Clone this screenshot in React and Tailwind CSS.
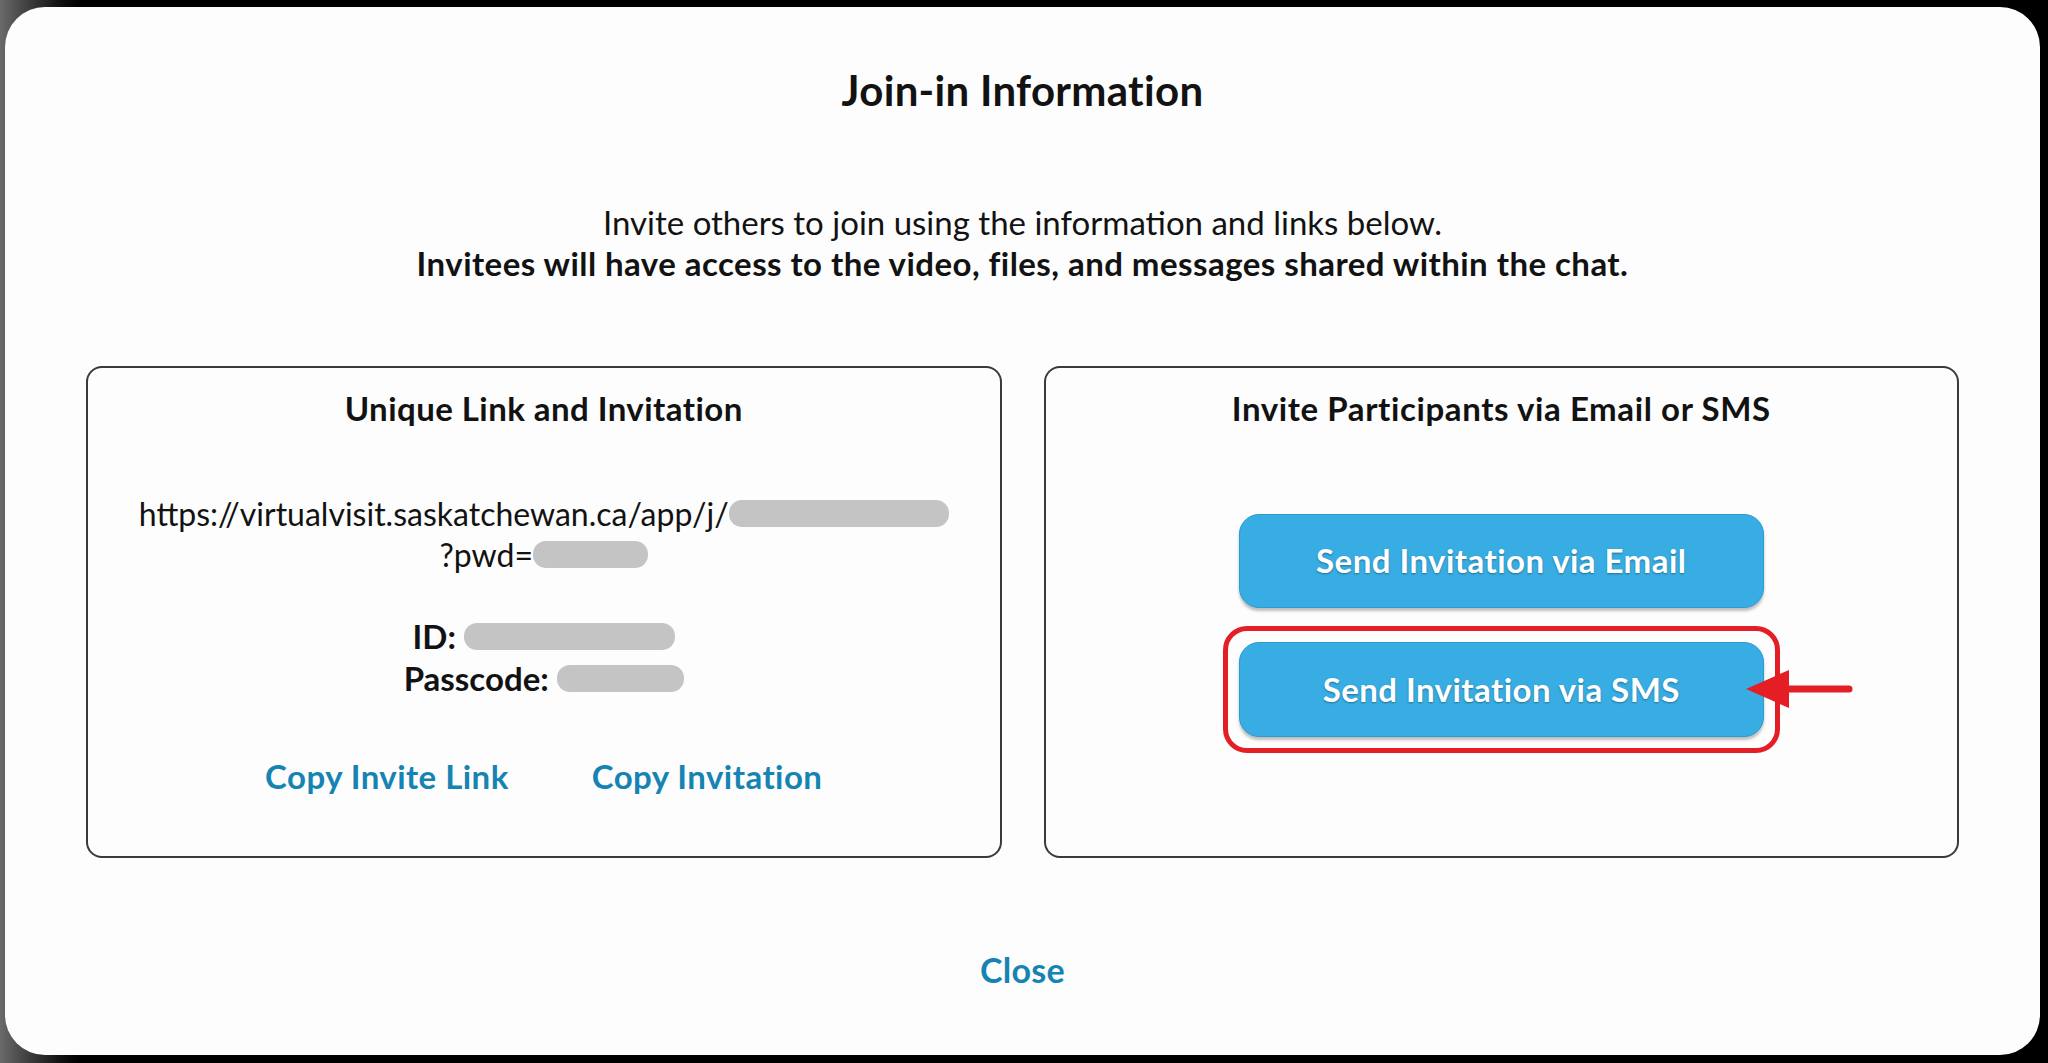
import React from 'react';

function Redacted({ className = '' }) {
  return <span className={`inline-block h-[27px] rounded-[13px] bg-[#c4c4c4] align-middle ${className}`} />;
}

export default function App() {
  return (
    <div className="min-h-screen w-full bg-[linear-gradient(to_right,#6a6a6a,#3c3c3c_30px,#111_60px,#000_80px)] pt-[7px] pl-[5px] pr-[8px] pb-[8px] font-['Lato',sans-serif] text-[#121212]">
      <div className="flex h-[1048px] flex-col items-center rounded-[40px] bg-[#fdfdfd] pt-[60px]">
        {/* Title */}
        <h1 className="text-[42px] font-bold leading-[46px] tracking-[0.3px]">Join-in Information</h1>

        {/* Description */}
        <div className="mt-[89px] text-center text-[33px] leading-[41px]">
          <p>Invite others to join using the information and links below.</p>
          <p className="font-bold tracking-[0.45px]">Invitees will have access to the video, files, and messages shared within the chat.</p>
        </div>

        {/* Panels */}
        <div className="mt-[82px] grid w-full grid-cols-2 gap-[42px] px-[81px]">
          {/* Left panel */}
          <div className="flex h-[492px] flex-col items-center rounded-[16px] border-2 border-[#3a3a3a] pt-[20px]">
            <h2 className="text-[33px] font-bold leading-[40px] tracking-[0.45px]">Unique Link and Invitation</h2>

            <div className="mt-[65px] text-center text-[32px] leading-[41px]">
              <p className="flex items-center justify-center">
                <span>https://virtualvisit.saskatchewan.ca/app/j/</span>
                <Redacted className="w-[220px]" />
              </p>
              <p className="flex items-center justify-center">
                <span>?pwd=</span>
                <Redacted className="w-[115px]" />
              </p>
            </div>

            <div className="mt-[40px] text-center text-[33px] font-bold leading-[42px]">
              <p className="flex items-center justify-center">
                <span className="mr-[8px]">ID:</span>
                <Redacted className="w-[211px]" />
              </p>
              <p className="flex items-center justify-center">
                <span className="mr-[8px]">Passcode:</span>
                <Redacted className="w-[127px]" />
              </p>
            </div>

            <div className="mt-[57px] flex items-center gap-[83px] text-[33px] font-bold leading-[40px] tracking-[0.45px] text-[#1684b3]">
              <button className="cursor-pointer">Copy Invite Link</button>
              <button className="cursor-pointer">Copy Invitation</button>
            </div>
          </div>

          {/* Right panel */}
          <div className="flex h-[492px] flex-col items-center rounded-[16px] border-2 border-[#3a3a3a] pt-[20px]">
            <h2 className="text-[33px] font-bold leading-[40px] tracking-[0.6px]">Invite Participants via Email or SMS</h2>

            <button className="mt-[86px] mb-[18px] flex h-[94px] w-[525px] items-center justify-center rounded-[20px] border border-[#2b9bd2] bg-[#37ade3] text-[33px] font-bold tracking-[0.45px] text-white shadow-[0_3px_3px_rgba(0,0,0,0.25)] [text-shadow:0_1px_2px_rgba(0,0,0,0.35)]">
              Send Invitation via Email
            </button>

            <div className="relative rounded-[24px] border-[5px] border-[#e31e25] p-[11px]">
              <button className="flex h-[95px] w-[525px] items-center justify-center rounded-[20px] border border-[#2b9bd2] bg-[#37ade3] text-[33px] font-bold tracking-[0.45px] text-white shadow-[0_3px_3px_rgba(0,0,0,0.25)] [text-shadow:0_1px_2px_rgba(0,0,0,0.35)]">
                Send Invitation via SMS
              </button>
              {/* annotation arrow */}
              <svg className="absolute left-[518px] top-[34px]" width="110" height="48" viewBox="0 0 110 48">
                <polygon points="0,24 43,5 43,43" fill="#e31e25" />
                <line x1="41" y1="24" x2="103" y2="24" stroke="#e31e25" strokeWidth="7" strokeLinecap="round" />
              </svg>
            </div>
          </div>
        </div>

        {/* Close */}
        <button className="mt-[92px] text-[34px] font-bold leading-[40px] tracking-[0.3px] text-[#1684b3]">Close</button>
      </div>
    </div>
  );
}
